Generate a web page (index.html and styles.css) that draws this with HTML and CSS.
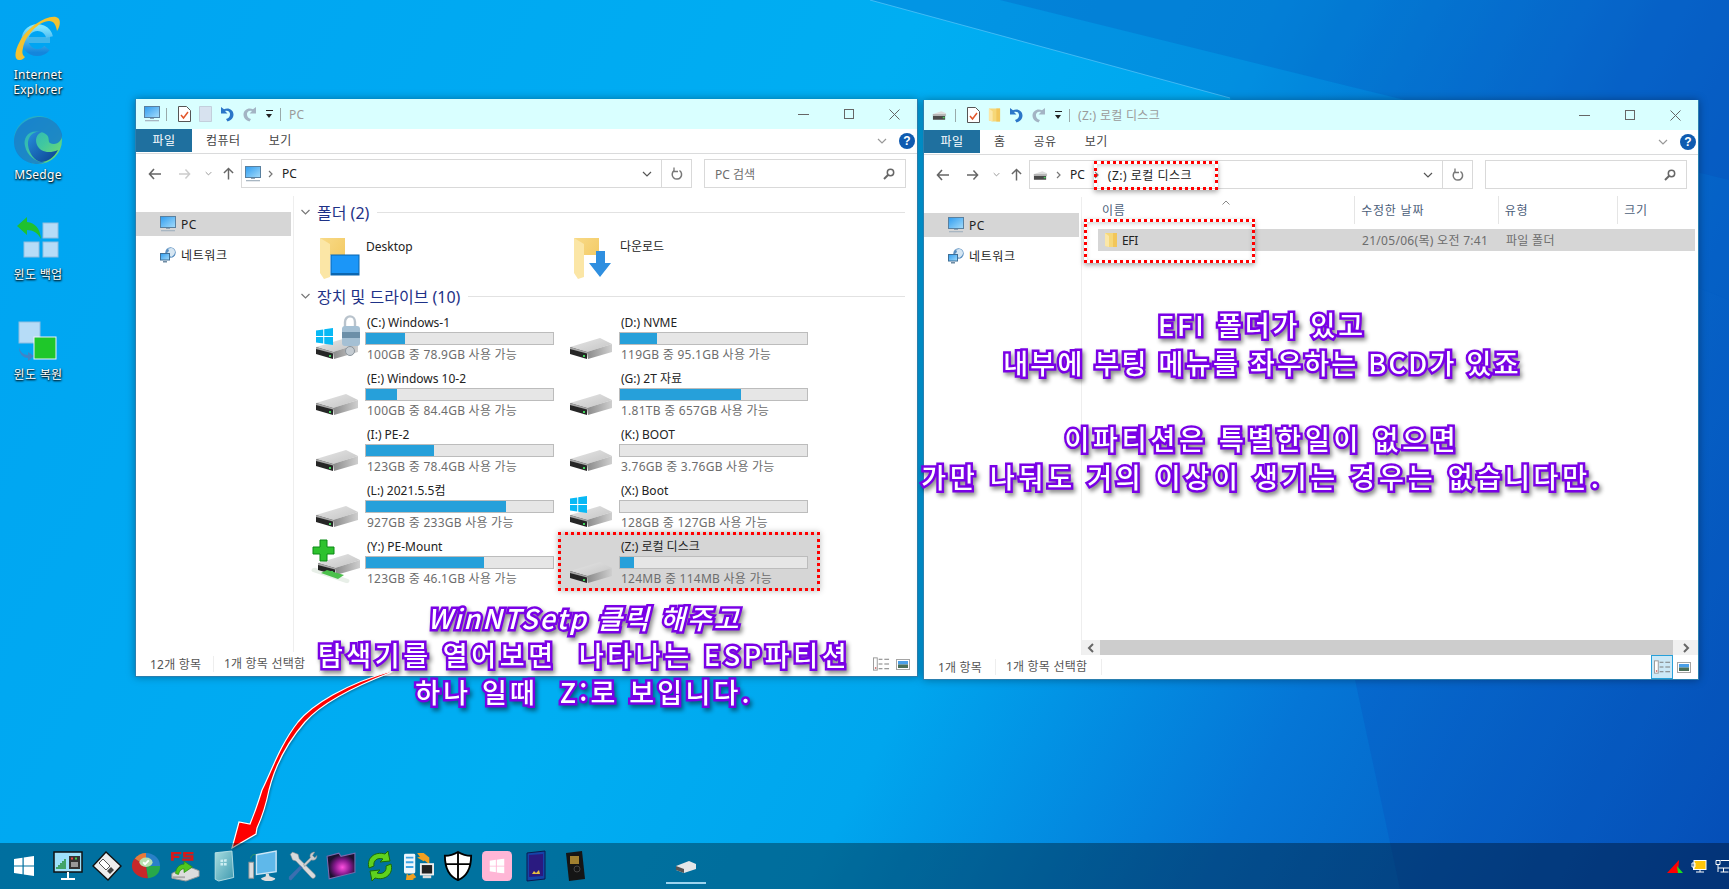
FILE: index.html
```html
<!DOCTYPE html>
<html lang="ko">
<head>
<meta charset="utf-8">
<title>PC</title>
<link rel="stylesheet" href="styles.css">
</head>
<body>
<svg class="sprite" xmlns="http://www.w3.org/2000/svg">
  <defs>
    <linearGradient id="gScreen" x1="0" y1="0" x2="1" y2="1"><stop offset="0" stop-color="#2e9cf0"/><stop offset="1" stop-color="#a5dcfa"/></linearGradient>
    <linearGradient id="gTop" x1="0" y1="0" x2="1" y2="1"><stop offset="0" stop-color="#e6e6e6"/><stop offset="1" stop-color="#c4c4c4"/></linearGradient>
    <linearGradient id="gSide" x1="0" y1="0" x2="1" y2="0"><stop offset="0" stop-color="#8a8a8a"/><stop offset="1" stop-color="#cfcfcf"/></linearGradient>
    <linearGradient id="gFolder" x1="0" y1="0" x2="1" y2="1"><stop offset="0" stop-color="#f8da88"/><stop offset="1" stop-color="#f2c65a"/></linearGradient>
    <linearGradient id="gIe" x1="0" y1="0" x2="0" y2="1"><stop offset="0" stop-color="#7fe4ff"/><stop offset="1" stop-color="#1486dc"/></linearGradient>
    <linearGradient id="gEdge" x1="0" y1="0" x2="1" y2="1"><stop offset="0" stop-color="#1aa0d8"/><stop offset=".6" stop-color="#40c8a0"/><stop offset="1" stop-color="#80e060"/></linearGradient>
    <linearGradient id="gEdge2" x1="0" y1="0" x2="1" y2="1"><stop offset="0" stop-color="#2790dd"/><stop offset="1" stop-color="#0a3f8f"/></linearGradient>
    <linearGradient id="gGlass" x1="0" y1="0" x2="1" y2="1"><stop offset="0" stop-color="#a8dde0"/><stop offset="1" stop-color="#3f9ab0"/></linearGradient>
    <radialGradient id="gPurple" cx=".55" cy=".55" r=".5"><stop offset="0" stop-color="#ff50e0"/><stop offset=".55" stop-color="#8a1a90"/><stop offset="1" stop-color="#1c1030"/></radialGradient>

    <symbol id="pc" viewBox="0 0 16 16"><rect x=".5" y=".5" width="15" height="11" fill="url(#gScreen)" stroke="#59809f"/><rect x="6" y="12" width="4" height="1" fill="#8ea3b5"/><rect x="1" y="14" width="14" height="1.3" fill="#a8b6c2"/></symbol>
    <symbol id="net" viewBox="0 0 16 16"><circle cx="10.500" cy="5.500" r="5.200" fill="#5a8fc0"/><path d="M7 2c3 0 2 3 0 4s3 2 4 4c2-1 4-3 4-5s-2-4-4-4z" fill="#d6e6f2"/><rect x=".5" y="6.500" width="9" height="6.500" fill="url(#gScreen)" stroke="#3f6f96"/><rect x="3" y="14" width="4" height="1.500" fill="#6f8ca4"/></symbol>
    <symbol id="drive-sm" viewBox="0 0 16 12"><path d="M1 5 10 2l5 2v1l-7 2.500z" fill="#ddd"/><path d="M1 5l13 .3v5.700H1z" fill="#4a4a4a"/><rect x="1" y="5" width="14" height="2" fill="#bbb"/><rect x="11.500" y="8" width="2" height="1.500" fill="#46d15b"/></symbol>
    <symbol id="drive" viewBox="0 0 48 48"><path d="M0 36 30 27l12 6-25 8z" fill="url(#gTop)"/><path d="M17 41l25-8v8L18 48z" fill="url(#gSide)"/><path d="M0 36l17 5v7L0 43z" fill="#262626"/><path d="M0 36l17 5v1.500L0 38z" fill="#a8a8a8"/><rect x="13" y="44" width="2" height="2" fill="#3fd35a"/></symbol>
    <symbol id="win" viewBox="0 0 20 20"><path d="M0 3l8.500-1.200V9.500H0zM9.700 1.600 20 0v9.500H9.700zM0 10.500h8.500v7.800L0 17zM9.700 10.500H20V20L9.700 18.500z" fill="currentColor"/></symbol>
    <symbol id="folder-big" viewBox="0 0 42 42"><path d="M1 1h25v17H11v19z" fill="url(#gFolder)"/><path d="M1 1l10 6v33l-6 2-4-6z" fill="#fbe6a6"/></symbol>
    <symbol id="folder-sm" viewBox="0 0 14 16"><path d="M1 1h12v14H5l-4-1z" fill="#f6d778"/><path d="M1 1l4 3v11l-4-1z" fill="#fbe7a8"/><path d="M13 1v14H9V1z" fill="#f2c65a"/></symbol>
    <symbol id="check-doc" viewBox="0 0 13 16"><path d="M.5.500h8l4 4v11H.5z" fill="#fff" stroke="#555"/><path d="M3 9l2.500 3L10 6" fill="none" stroke="#e2562a" stroke-width="1.500"/></symbol>
    <symbol id="blank-doc" viewBox="0 0 13 16"><path d="M.5.500h12v15H.5z" fill="#d7e2ef" stroke="#c3cfdc"/></symbol>
    <symbol id="undo" viewBox="0 0 14 16"><path d="M1 1v6.500h6.500L5 5c3-1 5.500 1 5 4-.4 2.200-2 3.500-4 4l1.500 2.500c3.500-1 6-3.500 6-7 0-5-5.500-7.500-9.500-5.200z" fill="#2b76c8"/></symbol>
    <symbol id="redo" viewBox="0 0 14 16"><path d="M13 1v6.500H6.500L9 5C6 4 3.500 6 4 9c.4 2.200 2 3.500 4 4l-1.500 2.500C3 14.500.5 12 .5 8.500c0-5 5.500-7.500 9.500-5.200z" fill="#a3b4c4"/></symbol>
    <symbol id="arrow" viewBox="0 0 13 12"><path d="M6 1 1.500 6 6 11M1.500 6H13" fill="none" stroke="currentColor" stroke-width="1.600"/></symbol>
    <symbol id="up" viewBox="0 0 12 13"><path d="M1 6l5-5 5 5M6 1v12" fill="none" stroke="currentColor" stroke-width="1.600"/></symbol>
    <symbol id="chev-d" viewBox="0 0 10 6"><path d="M1 1l4 4 4-4" fill="none" stroke="currentColor" stroke-width="1.200"/></symbol>
    <symbol id="chev-r" viewBox="0 0 5 8"><path d="M1 1l3 3-3 3" fill="none" stroke="currentColor" stroke-width="1.200"/></symbol>
    <symbol id="refresh" viewBox="0 0 12 14"><path d="M8.500 3.500a4.700 4.700 0 1 1-5.500.2" fill="none" stroke="#777" stroke-width="1.500"/><path d="M3 .5v4h4" fill="none" stroke="#777" stroke-width="1.300"/></symbol>
    <symbol id="search" viewBox="0 0 12 12"><circle cx="7.500" cy="4.500" r="3.200" fill="none" stroke="#666" stroke-width="1.500"/><path d="M5 7 1 11" stroke="#666" stroke-width="2"/></symbol>
    <symbol id="view-list" viewBox="0 0 18 14"><rect x=".5" y=".5" width="4" height="13" fill="#fff" stroke="#999"/><path d="M6 2h4M12 2h5M6 7h4M12 7h5M6 12h4M12 12h5" stroke="#777"/><rect x="2" y="10.500" width="1.500" height="1.500" fill="#c0504d"/></symbol>
    <symbol id="view-pic" viewBox="0 0 14 11"><rect x=".5" y=".5" width="13" height="10" fill="#fff" stroke="#a5a5a5"/><rect x="2" y="2" width="10" height="3.500" fill="#4a9fe8"/><rect x="2" y="5.500" width="10" height="3.500" fill="#4b6f58"/></symbol>
  </defs>
</svg>

<main class="desktop">
  <svg class="beams" viewBox="0 0 1729 889" preserveAspectRatio="none">
    <polygon points="870,0 1729,0 1729,300 1230,98" fill="#0a3fb0" opacity=".22"/>
    <polygon points="1000,0 1729,0 1729,180" fill="#0a3fb0" opacity=".2"/>
    <polygon points="1230,98 1729,300 1729,889 1400,889" fill="#0a3fb0" opacity=".18"/>
    <line x1="870" y1="0" x2="1230" y2="98" stroke="#7fd4ff" stroke-width="1" opacity=".5"/>
  </svg>

  <a class="dicon di-ie">
    <svg class="dicon-img" viewBox="0 0 46 46"><path d="M12 24h23" stroke="#3fb6ec" stroke-width="6" fill="none"/><path d="M34.500 21a12.500 12.500 0 1 0-2.500 11" fill="none" stroke="url(#gIe)" stroke-width="7"/><path d="M5 44C0 45-2 38 5 25 12 12 31-1 41 1c5 1 5 8 1 14-1-6-3-10-8-10C24 5 10 20 8 32c-1 4-1 7 2 9-1 1-3 3-5 3z" fill="#f2c230"/></svg>
    <span>Internet<br>Explorer</span>
  </a>
  <a class="dicon di-edge">
    <svg class="dicon-img" viewBox="0 0 48 48"><circle cx="24" cy="24" r="24" fill="url(#gEdge)"/><path d="M0 26C0 10 14 1 26 1c10 0 19 6 22 17 1 7-6 12-12 9-3-2 2-8-9-11C14 13 9 22 11 30c2 10 12 17 20 16-2 1-5 2-7 2C10 48 0 38 0 26z" fill="#167ccc" opacity=".85"/><path d="M14 29c-1-10 8-15 14-13-6 2-7 8-5 13 3 7 12 9 21 5-4 8-11 12-17 12-6-1-12-8-13-17z" fill="url(#gEdge2)"/></svg>
    <span>MSedge</span>
  </a>
  <a class="dicon di-backup">
    <svg class="dicon-img" viewBox="0 0 42 42"><g fill="#b6dcf7" stroke="#8fbde0"><rect x="26" y="6" width="15" height="15"/><rect x="7" y="25" width="15" height="15"/><rect x="26" y="25" width="15" height="15"/></g><path d="M0 9 10 0v5c8 1 13 6 14 17-3-6-8-9-14-9v5z" fill="#1fc12f"/></svg>
    <span>윈도 백업</span>
  </a>
  <a class="dicon di-restore">
    <svg class="dicon-img" viewBox="0 0 40 40"><rect x="1" y="1" width="21" height="21" fill="#b6dcf7" stroke="#8fbde0"/><path d="M1 26c1 5 5 8 9 8v-3l6 4-6 5v-3c-5 0-9-4-9-11z" fill="#3f84c8"/><rect x="16" y="16" width="22" height="22" fill="#1fc72a" stroke="#eef" stroke-width="1"/></svg>
    <span>윈도 복원</span>
  </a>

  <section class="window win-pc">
    <header class="titlebar">
      <svg class="qi qi-pc"><use href="#pc"/></svg><i class="qsep"></i>
      <svg class="qi qi-doc"><use href="#check-doc"/></svg>
      <svg class="qi qi-doc"><use href="#blank-doc"/></svg>
      <svg class="qi qi-arrow"><use href="#undo"/></svg>
      <svg class="qi qi-arrow"><use href="#redo"/></svg>
      <span class="qdrop"></span><i class="qsep"></i>
      <span class="wtitle">PC</span>
      <span class="controls"><i class="c-min"></i><i class="c-max"></i><svg class="c-close" viewBox="0 0 11 11"><path d="M.5.5l10 10M10.500.5l-10 10" stroke="#666" fill="none"/></svg></span>
    </header>
    <nav class="ribbon">
      <span class="tab tab-file">파일</span><span class="tab">컴퓨터</span><span class="tab">보기</span>
      <span class="ribbon-end"><svg class="rchev"><use href="#chev-d"/></svg><b class="help">?</b></span>
    </nav>
    <div class="addrrow">
      <div class="navbtns">
        <svg class="nb nb-back"><use href="#arrow"/></svg>
        <svg class="nb nb-fwd"><use href="#arrow"/></svg>
        <svg class="nb nb-down"><use href="#chev-d"/></svg>
        <svg class="nb nb-up"><use href="#up"/></svg>
      </div>
      <div class="addr">
        <svg class="addr-pc"><use href="#pc"/></svg>
        <svg class="crumb-chev"><use href="#chev-r"/></svg>
        <span class="crumb">PC</span>
        <svg class="addr-drop"><use href="#chev-d"/></svg>
        <span class="addr-ref"><svg><use href="#refresh"/></svg></span>
      </div>
      <div class="searchbox"><span>PC 검색</span><svg><use href="#search"/></svg></div>
    </div>
    <div class="panes">
      <aside class="navpane">
        <div class="navitem sel"><svg><use href="#pc"/></svg>PC</div>
        <div class="navitem"><svg><use href="#net"/></svg>네트워크</div>
      </aside>
      <div class="content">
        <h2 class="group"><svg><use href="#chev-d"/></svg><span>폴더 (2)</span><i></i></h2>
        <div class="folders">
          <div class="fitem">
            <svg class="ficon" viewBox="0 0 42 42"><use href="#folder-big" width="42" height="42"/><rect x="12" y="18" width="28" height="20" fill="#1b96f8" stroke="#0b66b0"/><rect x="12" y="36" width="28" height="2" fill="#0b66b0"/></svg>
            <span>Desktop</span>
          </div>
          <div class="fitem">
            <svg class="ficon" viewBox="0 0 42 42"><use href="#folder-big" width="42" height="42"/><path d="M23 14h9v12h6L27 40 16 26h7z" fill="#2f8fe0"/></svg>
            <span>다운로드</span>
          </div>
        </div>
        <h2 class="group"><svg><use href="#chev-d"/></svg><span>장치 및 드라이브 (10)</span><i></i></h2>
        <div class="drives">
          <div class="drv">
            <svg class="drv-ic" viewBox="0 0 48 48"><use href="#drive" width="48" height="48"/><circle cx="34" cy="40" r="4.500" fill="#c5ccd2" stroke="#8b959d"/><path d="M29 16V11c0-7.500 10-7.500 10 0v5" fill="none" stroke="#b9c3cc" stroke-width="2.400"/><rect x="26" y="15" width="18" height="20" rx="3" fill="#a5c0d4"/><rect x="26" y="21" width="18" height="6" fill="#6c8fa8"/><use href="#win" x="0" y="17" width="17" height="17" class="winblue"/></svg>
            <div class="drv-info"><div class="drv-name">(C:) Windows-1</div><div class="bar"><b style="width:21%"></b></div><div class="drv-sub">100GB 중 78.9GB 사용 가능</div></div>
          </div>
          <div class="drv">
            <svg class="drv-ic"><use href="#drive"/></svg>
            <div class="drv-info"><div class="drv-name">(D:) NVME</div><div class="bar"><b style="width:20%"></b></div><div class="drv-sub">119GB 중 95.1GB 사용 가능</div></div>
          </div>
          <div class="drv">
            <svg class="drv-ic"><use href="#drive"/></svg>
            <div class="drv-info"><div class="drv-name">(E:) Windows 10-2</div><div class="bar"><b style="width:16.5%"></b></div><div class="drv-sub">100GB 중 84.4GB 사용 가능</div></div>
          </div>
          <div class="drv">
            <svg class="drv-ic"><use href="#drive"/></svg>
            <div class="drv-info"><div class="drv-name">(G:) 2T 자료</div><div class="bar"><b style="width:64.5%"></b></div><div class="drv-sub">1.81TB 중 657GB 사용 가능</div></div>
          </div>
          <div class="drv">
            <svg class="drv-ic"><use href="#drive"/></svg>
            <div class="drv-info"><div class="drv-name">(I:) PE-2</div><div class="bar"><b style="width:36.5%"></b></div><div class="drv-sub">123GB 중 78.4GB 사용 가능</div></div>
          </div>
          <div class="drv">
            <svg class="drv-ic"><use href="#drive"/></svg>
            <div class="drv-info"><div class="drv-name">(K:) BOOT</div><div class="bar"></div><div class="drv-sub">3.76GB 중 3.76GB 사용 가능</div></div>
          </div>
          <div class="drv">
            <svg class="drv-ic"><use href="#drive"/></svg>
            <div class="drv-info"><div class="drv-name">(L:) 2021.5.5컴</div><div class="bar"><b style="width:74.6%"></b></div><div class="drv-sub">927GB 중 233GB 사용 가능</div></div>
          </div>
          <div class="drv">
            <svg class="drv-ic" viewBox="0 0 48 48"><use href="#drive" width="48" height="48"/><use href="#win" x="0" y="17" width="17" height="17" class="winblue"/></svg>
            <div class="drv-info"><div class="drv-name">(X:) Boot</div><div class="bar"></div><div class="drv-sub">128GB 중 127GB 사용 가능</div></div>
          </div>
          <div class="drv">
            <svg class="drv-ic" viewBox="0 0 48 48"><path d="M-3 37 30 48c3 1 5-3 2-4L0 33c-4-1-6 3-3 4z" fill="#e8efe8"/><use href="#drive" x="2" y="-8" width="48" height="48"/><path d="M5 38l17 6 6-4-17-5z" fill="#4cc04c"/><path d="M-3 12h7V5h7v7h7v7h-7v7H4v-7h-7z" fill="#2ec22e" stroke="#0a8a14"/></svg>
            <div class="drv-info"><div class="drv-name">(Y:) PE-Mount</div><div class="bar"><b style="width:63%"></b></div><div class="drv-sub">123GB 중 46.1GB 사용 가능</div></div>
          </div>
          <div class="drv drv-sel">
            <svg class="drv-ic"><use href="#drive"/></svg>
            <div class="drv-info"><div class="drv-name">(Z:) 로컬 디스크</div><div class="bar"><b style="width:7.5%"></b></div><div class="drv-sub">124MB 중 114MB 사용 가능</div></div>
          </div>
        </div>
      </div>
    </div>
    <footer class="status">
      <span class="st-a">12개 항목</span><span class="st-b">1개 항목 선택함</span>
      <span class="st-views"><span class="sv"><svg><use href="#view-list"/></svg></span><span class="sv"><svg class="vp"><use href="#view-pic"/></svg></span></span>
    </footer>
  </section>

  <section class="window win-z">
    <header class="titlebar tb-z">
      <svg class="qi qi-drv"><use href="#drive-sm"/></svg><i class="qsep"></i>
      <svg class="qi qi-doc"><use href="#check-doc"/></svg>
      <svg class="qi qi-doc"><use href="#folder-sm"/></svg>
      <svg class="qi qi-arrow"><use href="#undo"/></svg>
      <svg class="qi qi-arrow"><use href="#redo"/></svg>
      <span class="qdrop"></span><i class="qsep"></i>
      <span class="wtitle">(Z:) 로컬 디스크</span>
      <span class="controls"><i class="c-min"></i><i class="c-max"></i><svg class="c-close" viewBox="0 0 11 11"><path d="M.5.5l10 10M10.500.5l-10 10" stroke="#666" fill="none"/></svg></span>
    </header>
    <nav class="ribbon">
      <span class="tab tab-file">파일</span><span class="tab">홈</span><span class="tab">공유</span><span class="tab">보기</span>
      <span class="ribbon-end"><svg class="rchev"><use href="#chev-d"/></svg><b class="help">?</b></span>
    </nav>
    <div class="addrrow">
      <div class="navbtns">
        <svg class="nb nb-back"><use href="#arrow"/></svg>
        <svg class="nb nb-fwd2"><use href="#arrow"/></svg>
        <svg class="nb nb-down"><use href="#chev-d"/></svg>
        <svg class="nb nb-up"><use href="#up"/></svg>
      </div>
      <div class="addr">
        <svg class="addr-drv"><use href="#drive-sm"/></svg>
        <svg class="crumb-chev"><use href="#chev-r"/></svg>
        <span class="crumb">PC</span>
        <svg class="crumb-chev ch2"><use href="#chev-r"/></svg>
        <span class="crumb crumb-z">(Z:) 로컬 디스크</span>
        <svg class="addr-drop"><use href="#chev-d"/></svg>
        <span class="addr-ref"><svg><use href="#refresh"/></svg></span>
        <i class="redbox rb-addr"></i>
      </div>
      <div class="searchbox"><span></span><svg><use href="#search"/></svg></div>
    </div>
    <div class="panes">
      <aside class="navpane">
        <div class="navitem sel"><svg><use href="#pc"/></svg>PC</div>
        <div class="navitem"><svg><use href="#net"/></svg>네트워크</div>
      </aside>
      <div class="content content-z">
        <div class="cols">
          <span class="col col-name">이름<svg class="sort" viewBox="0 0 8 5"><path d="M.5 4.500 4 1l3.500 3.500" fill="none" stroke="#888"/></svg></span>
          <span class="col col-date">수정한 날짜</span>
          <span class="col col-type">유형</span>
          <span class="col col-size">크기</span>
        </div>
        <div class="list">
          <div class="frow">
            <span class="col-name fname"><svg><use href="#folder-sm"/></svg>EFI</span>
            <span class="col-date fmeta">21/05/06(목) 오전 7:41</span>
            <span class="col-type fmeta">파일 폴더</span>
            <i class="redbox rb-row"></i>
          </div>
        </div>
        <div class="hscroll">
          <svg class="hs-l" viewBox="0 0 6 10"><path d="M5 1 1 5l4 4" fill="none" stroke="#666" stroke-width="2"/></svg>
          <i class="hs-thumb"></i>
          <span class="hs-r"><svg viewBox="0 0 6 10"><path d="M1 1l4 4-4 4" fill="none" stroke="#666" stroke-width="2"/></svg></span>
        </div>
      </div>
    </div>
    <footer class="status st-z">
      <span class="st-a">1개 항목</span><span class="st-b">1개 항목 선택함</span>
      <span class="st-views"><span class="sv sv-on"><svg><use href="#view-list"/></svg></span><span class="sv"><svg class="vp"><use href="#view-pic"/></svg></span></span>
    </footer>
  </section>

  <svg class="bigarrow" viewBox="0 0 1729 889">
    <path d="M392 671C345 684 312 705 298 722 280 745 272 770 262 790 258 803 255 812 250 824L239 822 232 848 256 834 257 828C263 815 266 805 269 790 274 770 285 745 305 722 320 705 350 688 392 672Z" fill="#f00" stroke="#fff" stroke-width="1.200"/>
  </svg>

  <div class="note note-left">
    <p class="n1">WinNTSetp 클릭 해주고</p>
    <p class="n2">탐색기를 열어보면  나타나는 ESP파티션</p>
    <p class="n3">하나 일때  Z:로 보입니다.</p>
  </div>
  <div class="note note-right">
    <p class="n4">EFI 폴더가 있고</p>
    <p class="n5">내부에 부팅 메뉴를 좌우하는 BCD가 있죠</p>
    <p class="blank">&nbsp;</p>
    <p class="n6">이파티션은 특별한일이 없으면</p>
    <p class="n7">가만 나둬도 거의 이상이 생기는 경우는 없습니다만.</p>
  </div>

  <footer class="taskbar">
    <span class="tb tb-start"><svg><use href="#win"/></svg></span>
    <span class="tb"><svg viewBox="0 0 30 30"><rect x="1" y="1" width="28" height="20" fill="#9ee0fa" stroke="#111" stroke-width="1.500"/><path d="M4 18v-2M6 18v-4M8 18v-6M10 18v-8M12 18V8" stroke="#1a8a2a" stroke-width="1.400"/><rect x="16" y="5" width="11" height="13" fill="#333"/><rect x="18" y="6.500" width="2" height="2" fill="#e44"/><rect x="22" y="6.500" width="2" height="2" fill="#4c4"/><rect x="18" y="11" width="7" height="5" fill="#999"/><path d="M15 21v6M8 28h14" stroke="#fff" stroke-width="2"/></svg></span>
    <span class="tb"><svg viewBox="0 0 30 30"><path d="M14 1 29 15 16 29 1 15z" fill="#eee" stroke="#111" stroke-width="1.400"/><path d="M11 8l7 7-4 4-7-7z" fill="#fff" stroke="#555"/><path d="M15 20l4-4 3 3-4 4z" fill="#444"/></svg></span>
    <span class="tb"><svg viewBox="0 0 32 30"><path d="M16 15V1a15 14 0 0 1 15 14z" fill="#2a80c8"/><path d="M16 15H31c0 8-5 12-13 13z" fill="#27a84a"/><path d="M16 15 18 28C8 28 1 22 1 15c0-3 1-6 3-8z" fill="#c8282a"/><path d="M16 15 4 7c3-4 7-6 12-6z" fill="#e87a3a"/><ellipse cx="16" cy="11" rx="7" ry="5" fill="#b8e0b0"/><path d="M13 11l2 2 4-4" fill="none" stroke="#fff" stroke-width="2"/></svg></span>
    <span class="tb"><svg viewBox="0 0 32 32"><path d="M1 1h11v2.500H4V5h6v2.500H4v3H1zM14 1h11v2.500h-8v1h8v6H13V8h9V7h-8z" fill="#d81818"/><path d="M2 24l16-8 13 5v6l-14 5-15-3z" fill="#ddd" stroke="#999"/><path d="M3 27h13v2H3z" fill="#aaa"/><path d="M6 24c0-6 4-10 9-10v-3l9 6-9 6v-4c-3 0-5 2-6 6z" fill="#4ec81e" stroke="#2a8a10" stroke-width=".8"/></svg></span>
    <span class="tb"><svg viewBox="0 0 22 34"><path d="M1 2 20 0l2 30-17 4-4-2z" fill="url(#gGlass)" stroke="#bde4e8"/><path d="M7 10l3-.5v3H7zM11 9.500l3-.5v3.300h-3zM7 13.500h3v3H7zM11 13.500h3v3h-3z" fill="#cdeef2"/></svg></span>
    <span class="tb"><svg viewBox="0 0 30 32"><rect x="0" y="12" width="5" height="17" fill="#ddd" stroke="#999"/><path d="M2 8c0-3 3-5 6-4" fill="none" stroke="#3a9a5a"/><path d="M8 4 29 0v22L8 25z" fill="#5fb8ea" stroke="#cce6f6" stroke-width="1.500"/><path d="M18 24h3l1 3 6 2c0 2-3 3-7 3s-8-1-8-3l5-2z" fill="#ddd"/></svg></span>
    <span class="tb"><svg viewBox="0 0 27 27"><path d="M5 1 3 3l2 5 3 1 14 15c2 2 5-1 3-3L11 7 10 3z" fill="#d8dadc" stroke="#888" stroke-width=".5"/><path d="M2 23 12 13l2 2L4 26c-2 1-3-1-2-3z" fill="#3a6fb0"/><path d="M15 12 21 6c-1-3 1-5 4-5l-2 3 2 2 2-2c0 3-2 5-5 4l-6 6z" fill="#c8ccd0" stroke="#888" stroke-width=".5"/></svg></span>
    <span class="tb"><svg viewBox="0 0 28 26"><path d="M1 4 12 1l2 3 13-3v18L3 25z" fill="url(#gPurple)" stroke="#7a6ab0"/></svg></span>
    <span class="tb"><svg viewBox="0 0 30 30"><path d="M4 17C1 7 10 0 20 3l3-3 2 10-10 1 3-3C12 6 8 10 9 15z" fill="#5ed21e" stroke="#1a6a08"/><path d="M26 13c3 10-6 17-16 14l-3 3-2-10 10-1-3 3c6 2 10-2 9-7z" fill="#5ed21e" stroke="#1a6a08"/></svg></span>
    <span class="tb"><svg viewBox="0 0 32 30"><rect x="0" y="2" width="12" height="21" rx="1.500" fill="#eef6fb"/><path d="M2 6h8M2 11h8M2 16h8" stroke="#3fa4e4" stroke-width="2"/><path d="M14 1h7l6 5V13l-5-4-1 1-7-4 3-1z" fill="#f0a020"/><rect x="17" y="12" width="15" height="13" fill="#eee"/><rect x="19" y="14" width="11" height="9" fill="#222"/><rect x="20" y="25" width="9" height="3" fill="#ddd"/><path d="M2 30l1-7 2 2 5-2 3 4-4 2 2 1z" fill="#f0a020"/></svg></span>
    <span class="tb"><svg viewBox="0 0 30 32"><path d="M15 1C10 4 5 5 1 5c0 10 2 21 14 26 12-5 14-16 14-26-4 0-9-1-14-4z" fill="#fff" stroke="#000" stroke-width="2"/><path d="M15 1v30M2 14h26" stroke="#000" stroke-width="2"/></svg></span>
    <span class="tb"><svg viewBox="0 0 28 28"><rect width="28" height="28" rx="4" fill="#ffb6d6"/><use href="#win" x="7" y="7" width="14" height="14" class="winwhite"/></svg></span>
    <span class="tb"><svg viewBox="0 0 20 30"><path d="M1 2 19 0v28L1 30z" fill="#1444a8" stroke="#0a1a50"/><path d="M3 4 17 3v22L3 26z" fill="#2a1a80"/><path d="M6 23l2-3 2 2 3-3 1 4z" fill="#e8c040"/></svg></span>
    <span class="tb"><svg viewBox="0 0 20 30"><path d="M1 2 17 0l3 28L4 30z" fill="#151515"/><rect x="5" y="5" width="9" height="8" fill="#a08030"/><circle cx="12" cy="18" r="3" fill="none" stroke="#444"/></svg></span>
    <span class="tb-run"><svg viewBox="0 0 22 15"><path d="M1 7 14 2l7 3v5L9 14 1 11z" fill="#e4e6e8"/><path d="M1 7l8 3v4l-8-3z" fill="#555"/></svg></span>
    <span class="tray">
      <svg class="tr-a" viewBox="0 0 16 13"><path d="M0 13 12 0l-1 13z" fill="#f00"/><path d="M10 6l6 7h-5z" fill="#1de01d"/></svg>
      <svg class="tr-b" viewBox="0 0 16 13"><rect x="3" y=".5" width="12" height="9" fill="#ffc50a" stroke="#fff"/><path d="M5 12h8M9 10v2M1 3v4h3V3zM2.500 7v3" stroke="#fff" fill="none"/></svg>
      <svg class="tr-c" viewBox="0 0 14 13"><path d="M.5.500h4v4h-4zM2.500 4.500V12M2.500 8H14M8 8V12M5 12h8M5 .5h9" stroke="#fff" fill="none"/></svg>
    </span>
  </footer>
</main>
</body>
</html>
```
FILE: styles.css
```css
* { box-sizing: border-box; }
html, body { margin: 0; height: 100%; overflow: hidden; }
body { font-family: "Noto Sans", "Noto Sans CJK KR", sans-serif; font-size: 12px; color: #222; }
.sprite { position: absolute; width: 0; height: 0; }
svg { display: block; overflow: visible; }

.desktop {
  position: relative;
  width: 1729px;
  height: 889px;
  display: flex;
  flex-direction: column;
  justify-content: flex-end;
  overflow: hidden;
  background:
    linear-gradient(118deg, #00a4f2 0%, #00aef2 42%, #00a6ee 58%, #0576d6 76%, #0452b8 100%);
}
.beams { position: absolute; inset: 0; width: 100%; height: 100%; }

/* desktop icons */
.dicon {
  position: absolute;
  display: flex;
  flex-direction: column;
  align-items: center;
  width: 76px;
  color: #fff;
  font-size: 12px;
  line-height: 15px;
  text-align: center;
  letter-spacing: .3px;
  text-shadow: 0 1px 2px #000, 1px 1px 2px rgba(0,0,0,.7);
}
.dicon-img { flex: none; }
.di-ie { left: 0; top: 16px; }
.di-ie .dicon-img { width: 46px; height: 46px; margin-bottom: 5px; }
.di-edge { left: 0; top: 116px; }
.di-edge .dicon-img { width: 48px; height: 48px; margin-bottom: 3px; }
.di-backup { left: 0; top: 217px; }
.di-backup .dicon-img { width: 42px; height: 42px; margin-bottom: 8px; }
.di-restore { left: 0; top: 321px; }
.di-restore .dicon-img { width: 40px; height: 40px; margin-bottom: 6px; }

/* windows */
.window {
  position: absolute;
  display: flex;
  flex-direction: column;
  background: #fff;
  border: 1px solid #2a7fb0;
  border-top: 0;
  box-shadow: 0 0 8px rgba(0,0,0,.35);
}
.win-pc { left: 135px; top: 99px; width: 783px; height: 578px; }
.win-z { left: 923px; top: 100px; width: 776px; height: 580px; }

.titlebar {
  flex: none;
  height: 30px;
  background: #d9ffff;
  display: flex;
  align-items: center;
  padding-left: 8px;
}
.qi { flex: none; }
.qi-pc { width: 16px; height: 16px; margin-right: 6px; }
.qi-drv { width: 15px; height: 12px; margin-right: 8px; }
.qsep { flex: none; width: 1px; height: 13px; background: #9aa; margin-right: 11px; }
.qi-doc { width: 13px; height: 16px; margin-right: 8px; }
.qi-arrow { width: 14px; height: 16px; margin-right: 9px; }
.qdrop { flex: none; width: 7px; height: 8px; margin-right: 7px; border-top: 1px solid #222; position: relative; }
.qdrop::after { content: ""; position: absolute; left: 0; top: 3px; border: 3.5px solid transparent; border-top: 4px solid #222; border-bottom: 0; }
.wtitle { color: #9a9a9a; margin-left: -3px; letter-spacing: .3px; }
.controls { margin-left: auto; display: flex; align-items: center; padding-right: 17px; }
.c-min { width: 11px; height: 1px; background: #666; margin-right: 35px; }
.c-max { width: 10px; height: 10px; border: 1px solid #666; margin-right: 35px; }
.c-close { width: 11px; height: 11px; }

.ribbon {
  flex: none;
  height: 25px;
  display: flex;
  align-items: stretch;
  border-bottom: 1px solid #dadbdc;
  padding-bottom: 1px;
  color: #444;
  line-height: 23px;
}
.tab { padding: 0 14px; letter-spacing: .5px; }
.tab-file { width: 56px; padding: 0; text-align: center; background: #1f709f; color: #fff; }
.ribbon-end { margin-left: auto; display: flex; align-items: center; padding-right: 2px; }
.rchev { width: 10px; height: 6px; color: #999; margin-right: 12px; }
.help { width: 16px; height: 16px; border-radius: 50%; background: #0f5bb0; color: #fff; font: bold 12px/16px "Liberation Sans", sans-serif; text-align: center; }

.addrrow { flex: none; height: 42px; display: flex; align-items: flex-start; padding: 5px 11px 0 0; }
.navbtns { flex: none; width: 105px; height: 29px; position: relative; display: flex; align-items: center; padding-left: 12px; color: #666; }
.nb { flex: none; }
.nb-back { width: 13px; height: 12px; margin-right: 18px; }
.nb-fwd { width: 12px; height: 12px; margin-right: 14px; transform: scaleX(-1); color: #ccc; }
.nb-fwd2 { width: 12px; height: 12px; margin-right: 14px; transform: scaleX(-1); color: #666; }
.nb-down { width: 7px; height: 5px; margin-right: 11px; color: #888; }
.nb-up { width: 11px; height: 13px; }
.addr {
  flex: 1;
  height: 29px;
  position: relative;
  border: 1px solid #d9d9d9;
  display: flex;
  align-items: center;
  padding-left: 3px;
}
.addr-pc { width: 16px; height: 16px; margin-right: 7px; }
.addr-drv { width: 15px; height: 12px; margin-right: 8px; }
.crumb-chev { width: 5px; height: 8px; color: #777; margin-right: 9px; }
.ch2 { margin-left: 9px; }
.crumb { color: #222; }
.crumb-z { letter-spacing: .5px; }
.addr-drop { width: 10px; height: 6px; margin-left: auto; margin-right: 9px; color: #555; }
.addr-ref { width: 30px; height: 27px; border-left: 1px solid #d9d9d9; display: flex; align-items: center; justify-content: center; }
.addr-ref svg { width: 12px; height: 14px; }
.searchbox {
  flex: none;
  width: 202px;
  height: 29px;
  margin-left: 12px;
  border: 1px solid #d9d9d9;
  display: flex;
  align-items: center;
  justify-content: space-between;
  padding: 0 10px;
  color: #6d6d6d;
}
.searchbox svg { width: 12px; height: 12px; }

.panes { flex: 1; min-height: 0; display: flex; }
.navpane { flex: none; width: 158px; border-right: 1px solid #eee; padding: 16px 2px 0 0; display: flex; flex-direction: column; gap: 7px; }
.navitem { height: 24px; display: flex; align-items: center; padding-left: 24px; color: #222; letter-spacing: .6px; }
.navitem svg { width: 16px; height: 16px; margin-right: 5px; }
.navitem.sel { background: #d6d6d6; }

.content { flex: 1; min-width: 0; padding-top: 6px; display: flex; flex-direction: column; }
.group { margin: 0; height: 20px; display: flex; align-items: center; font-weight: 400; font-size: 16px; color: #1e3287; padding-left: 6px; }
.group svg { width: 11px; height: 6px; margin-right: 6px; color: #777; flex: none; }
.group i { flex: 1; height: 1px; background: #e2e2e2; margin: 0 12px 0 8px; }

.folders { height: 64px; display: grid; grid-template-columns: 254px 254px; padding-left: 13px; }
.fitem { display: flex; padding: 15px 0 0 12px; font-size: 12px; }
.fitem span { padding-top: 1px; margin-left: 5px; line-height: 18px; }
.ficon { width: 42px; height: 42px; flex: none; }

.drives { display: grid; grid-template-columns: 254px 254px; grid-auto-rows: 53px; row-gap: 3px; padding: 5px 0 0 13px; }
.drv { display: flex; padding-left: 9px; }
.drv-ic { flex: none; width: 48px; height: 48px; margin-right: 1px; }
.winblue { color: #08b9f5; }
.winwhite { color: #fff; }
.drv-info { width: 189px; padding-top: 3px; }
.drv-name { line-height: 17px; padding-left: 2px; height: 18px; color: #222; }
.bar { height: 13px; background: #e6e6e6; border: 1px solid #bcbcbc; }
.bar b { display: block; height: 100%; background: #26a0da; }
.drv-sub { color: #6d6d6d; line-height: 19px; padding-left: 2px; letter-spacing: .25px; }
.drv-sel {
  background: #d6d6d6;
  outline: 3px dotted #f00;
  outline-offset: 0;
  margin-right: -2px;
  box-shadow: 0 0 6px 3px rgba(0,0,0,.25);
  position: relative;
}

.content-z { padding-top: 0; }
.cols { flex: none; height: 28px; margin-top: -1px; display: flex; align-items: center; color: #4c607a; letter-spacing: .8px; }
.col { height: 100%; display: flex; align-items: center; border-right: 1px solid #e5e5e5; padding-left: 6px; position: relative; }
.col-name { width: 274px; padding-left: 20px; }
.col-date { width: 144px; }
.col-type { width: 120px; }
.col-size { width: 80px; border-right: 0; }
.sort { position: absolute; left: 140px; top: 4px; width: 8px; height: 5px; }
.list { flex: 1; padding: 5px 3px 0 16px; position: relative; }
.frow { height: 22px; background: #d6d6d6; display: flex; align-items: center; position: relative; }
.fname { width: 258px; display: flex; align-items: center; padding-left: 6px; letter-spacing: -.3px; }
.fname svg { width: 14px; height: 16px; margin-right: 4px; }
.fmeta { color: #6d6d6d; padding-left: 6px; letter-spacing: .3px; }
.hscroll { flex: none; height: 15px; background: #f0f0f0; display: flex; align-items: center; }
.hs-l { width: 6px; height: 10px; margin: 0 6px; flex: none; }
.hs-thumb { flex: 1; height: 100%; background: #cdcdcd; }
.hs-r { flex: none; width: 25px; display: flex; justify-content: center; }
.hs-r svg { width: 6px; height: 10px; }

.status { flex: none; height: 24px; display: flex; align-items: center; color: #555; padding-left: 14px; letter-spacing: .2px; }
.st-a { flex: none; width: 63px; }
.st-b { flex: none; border-left: 1px solid #eee; padding-left: 10px; line-height: 16px; width: 107px; border-right: 1px solid #eee; }
.status.st-z .st-a { width: 57px; }
.st-views { margin-left: auto; display: flex; height: 100%; align-items: stretch; padding-right: 3px; }
.sv { width: 22px; display: flex; align-items: center; justify-content: center; }
.sv svg { width: 17px; height: 14px; }
.sv .vp { width: 14px; height: 11px; }
.sv-on { background: #cce8f6; border: 1px solid #26a0da; }

.redbox { position: absolute; border: 3px dotted #f00; box-shadow: 0 2px 5px rgba(0,0,0,.35), inset 0 2px 4px rgba(0,0,0,.15); pointer-events: none; }
.rb-addr { left: 64px; top: 0; width: 124px; height: 29px; }
.rb-row { left: -14px; top: -10px; width: 171px; height: 44px; }

.bigarrow { position: absolute; inset: 0; width: 1729px; height: 889px; filter: drop-shadow(1px 1px 1px rgba(0,0,0,.3)); }

/* hand-lettered notes */
.note {
  position: absolute;
  text-align: center;
  font-family: "Noto Sans CJK KR", "Noto Sans", sans-serif;
  font-weight: 500;
  color: #fff;
  font-size: 27px;
  line-height: 37px;
  filter: drop-shadow(2px 3px 2px rgba(0,0,0,.45));
}
.note p { margin: 0; white-space: pre; -webkit-text-stroke: 5px #7a00e6; paint-order: stroke fill; }
.note-left { left: 284px; top: 599px; width: 600px; }
.note-right { left: 862px; top: 306px; width: 800px; line-height: 38px; }
.n1 { letter-spacing: 1.900px; font-style: italic; }
.n2 { letter-spacing: 3.600px; }
.n3 { letter-spacing: 3.200px; }
.n4 { letter-spacing: 2.900px; }
.n5 { letter-spacing: 2.300px; }
.n6 { letter-spacing: 3.800px; }
.n7 { letter-spacing: 3.800px; }

/* taskbar */
.taskbar {
  position: relative;
  flex: none;
  height: 46px;
  background: rgba(0,0,0,.34);
  display: flex;
  align-items: center;
}
.tb { flex: none; width: 39px; height: 46px; display: flex; align-items: center; justify-content: center; }
.tb svg { width: 30px; height: 30px; }
.tb-start { width: 48px; color: #fff; }
.tb-start svg { width: 20px; height: 20px; }
.tb-run { flex: none; align-self: flex-start; width: 40px; height: 41px; margin-left: 72px; display: flex; align-items: center; justify-content: center; border-bottom: 2px solid #9cd3ee; padding-top: 8px; }
.tb-run svg { width: 22px; height: 15px; }
.tray { margin-left: auto; display: flex; align-items: center; gap: 8px; margin-right: -1px; }
.tr-a { width: 16px; height: 13px; }
.tr-b { width: 16px; height: 13px; }
.tr-c { width: 15px; height: 13px; }
```
